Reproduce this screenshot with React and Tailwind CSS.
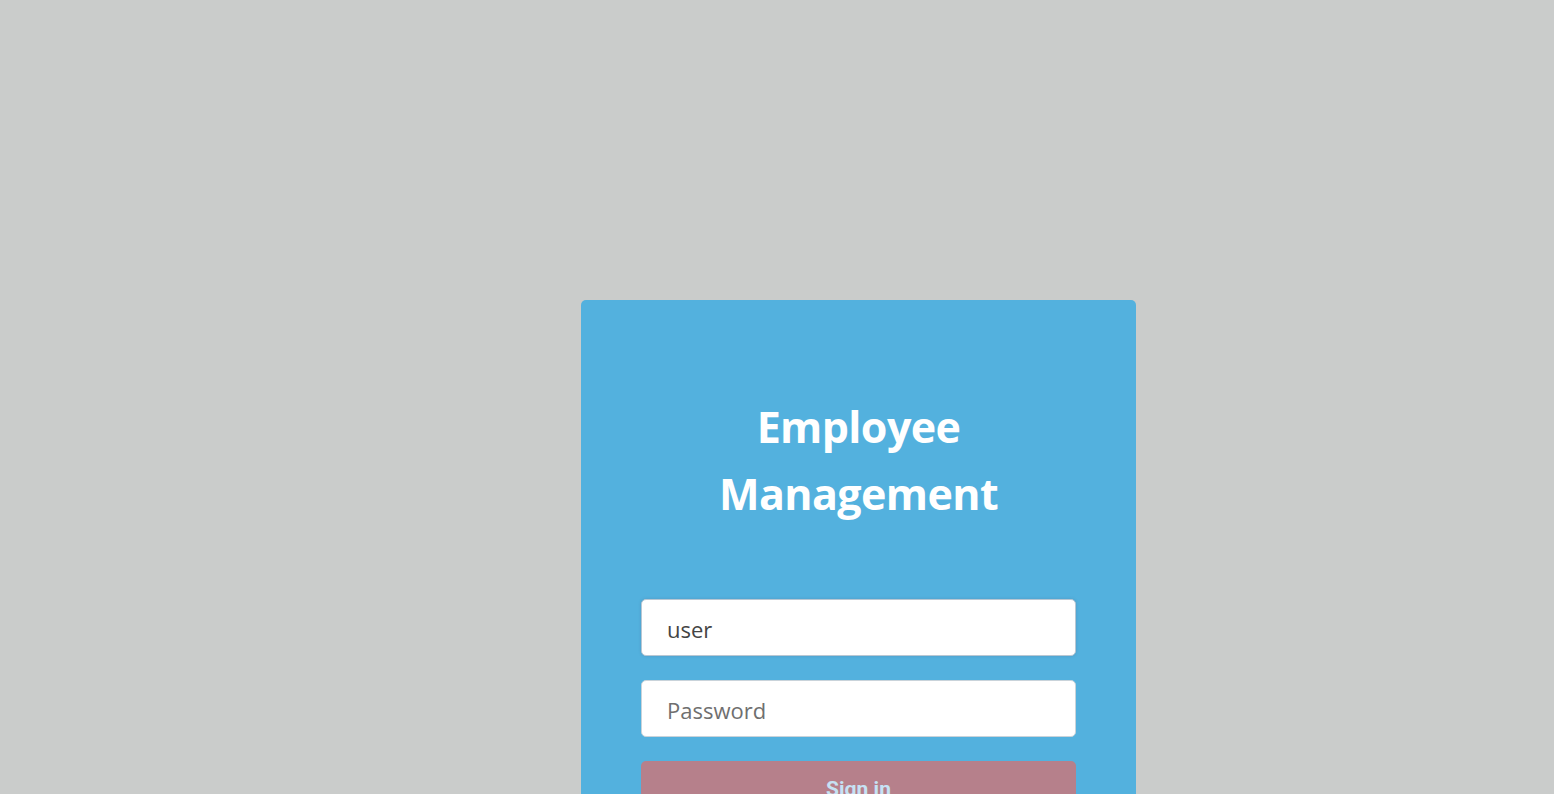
import { useEffect, useRef } from 'react';

export default function App() {
  const userRef = useRef(null);

  useEffect(() => {
    const el = userRef.current;
    if (el) {
      el.focus();
      el.setSelectionRange(4, 4);
    }
  }, []);

  return (
    <div className="min-h-[1026px] bg-[#cacccb] pl-[581px] pt-[300px] font-['Open_Sans','Noto_Sans',sans-serif]">
      <div className="w-[555px] rounded-[5px] bg-[#53b1de] px-[60px] pb-[60px] pt-[93px]">
        <h1 className="text-center text-[43px] font-bold leading-[67px] tracking-[-0.6px] text-white">
          Employee
          <br />
          Management
        </h1>

        <form className="mt-[72px] flex flex-col gap-6" onSubmit={(e) => e.preventDefault()}>
          <input
            ref={userRef}
            type="text"
            defaultValue="user"
            className="h-[57px] w-full rounded-[5px] border border-[#b8c7d3] bg-white px-[25px] pt-[3px] text-[22px] text-[#444] shadow-[0_0_3px_rgba(80,120,160,0.45)] caret-[#333] outline-none"
          />
          <input
            type="password"
            placeholder="Password"
            className="h-[57px] w-full rounded-[5px] border border-[#c9d3da] bg-white px-[25px] pt-[3px] text-[22px] text-[#444] outline-none placeholder:text-[#6f6f6f]"
          />
          <button
            type="submit"
            className="h-[57px] w-full rounded-[5px] bg-[#b6808b] font-['Roboto','Liberation_Sans',sans-serif] text-[21px] font-bold text-[#c6e2f4]"
          >
            Sign in
          </button>
        </form>
      </div>
    </div>
  );
}
